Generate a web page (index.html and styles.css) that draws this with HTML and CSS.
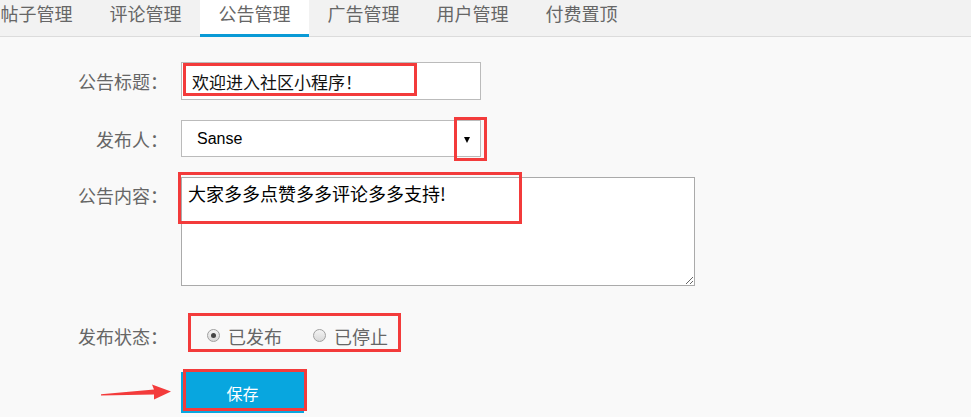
FILE: index.html
```html
<!DOCTYPE html>
<html lang="zh-CN">
<head>
<meta charset="utf-8">
<title>公告管理</title>
<link rel="stylesheet" href="styles.css">
</head>
<body>
<nav class="tabs">
  <div class="tab">帖子管理</div>
  <div class="tab">评论管理</div>
  <div class="tab active">公告管理</div>
  <div class="tab">广告管理</div>
  <div class="tab">用户管理</div>
  <div class="tab">付费置顶</div>
</nav>
<form class="form">
  <div class="row">
    <label class="label">公告标题：</label>
    <div class="field">
      <input class="text-input" type="text" value="欢迎进入社区小程序！">
      <span class="mark mark-title"></span>
    </div>
  </div>
  <div class="row">
    <label class="label">发布人：</label>
    <div class="field">
      <div class="select"><span class="select-value">Sanse</span><span class="caret"></span></div>
      <span class="mark mark-caret"></span>
    </div>
  </div>
  <div class="row row-top">
    <label class="label label-top">公告内容：</label>
    <div class="field">
      <textarea class="textarea">大家多多点赞多多评论多多支持!</textarea>
      <span class="mark mark-content"></span>
    </div>
  </div>
  <div class="row row-status">
    <label class="label label-status">发布状态：</label>
    <div class="radio-group">
      <span class="radio-item"><span class="radio checked"></span>已发布</span>
      <span class="radio-item"><span class="radio"></span>已停止</span>
    </div>
  </div>
  <div class="row row-submit">
    <div class="arrow-cell">
      <svg class="arrow" width="74" height="20" viewBox="0 0 74 20">
        <polygon points="2,11.2 55,6.5 53,1.5 72,8.5 55,16.5 55,11.5 2,12.6" fill="#f33b3b"/>
      </svg>
    </div>
    <div class="field">
      <button type="button" class="btn">保存</button>
      <span class="mark mark-btn"></span>
    </div>
  </div>
</form>
</body>
</html>
```
FILE: styles.css
```css
* { box-sizing: border-box; }
body {
  margin: 0;
  background: #f9f9f9;
  font-family: "Noto Sans CJK SC", "Liberation Sans", sans-serif;
  color: #666;
  overflow: hidden;
}
.tabs {
  display: flex;
  height: 37px;
  background: #f2f2f2;
  border-bottom: 1px solid #dcdcdc;
  padding-left: 0;
  margin-left: -18px;
}
.tab {
  width: 109px;
  height: 37px;
  margin-bottom: -1px;
  text-align: center;
  font-size: 18px;
  line-height: 26px;
  color: #666;
}
.tab.active {
  background: #fff;
  border-bottom: 3px solid #0a9ad6;
}
.form {
  padding-top: 25px;
}
.row {
  display: flex;
  align-items: center;
  margin-bottom: 20px;
}
.row-top { align-items: flex-start; }
.row-status { margin-bottom: 20px; margin-top: 27px; }
.label {
  width: 168px;
  margin-right: 13px;
  text-align: right;
  font-size: 18px;
  color: #666;
  white-space: nowrap;
}
.label-top { line-height: 36px; }
.label-status { padding-top: 7px; }
.field { position: relative; }
.text-input {
  display: block;
  width: 300px;
  height: 38px;
  border: 1px solid #bbb;
  background: #fff;
  padding: 0 10px;
  font-family: "Noto Sans CJK SC", sans-serif;
  font-size: 17px;
  color: #111;
  outline: none;
}
.select {
  display: flex;
  align-items: center;
  width: 300px;
  height: 37px;
  border: 1px solid #bbb;
  background: #fff;
  padding-left: 15px;
}
.select-value {
  flex: 1;
  font-family: "Liberation Sans", Arial, sans-serif;
  font-size: 16px;
  color: #000;
}
.caret {
  width: 0;
  height: 0;
  border-left: 3.5px solid transparent;
  border-right: 3.5px solid transparent;
  border-top: 6px solid #000;
  margin-right: 10px;
  margin-top: 2px;
}
.textarea {
  display: block;
  width: 514px;
  height: 109px;
  border: 1px solid #aaa;
  background: #fff;
  padding: 3px 6px;
  font-family: "Noto Sans CJK SC", sans-serif;
  font-size: 18px;
  line-height: 24px;
  color: #000;
  outline: none;
}
.mark {
  position: absolute;
  border: 3px solid #f33b3b;
  pointer-events: none;
}
.mark-title { left: 2px; top: 1px; width: 234px; height: 33px; }
.mark-caret { left: 273px; top: -3px; width: 33px; height: 44px; }
.mark-content { left: -3px; top: -5px; width: 344px; height: 52px; }
.mark-btn { left: 2px; top: -3px; width: 124px; height: 42px; }
.radio-group {
  display: flex;
  align-items: center;
  margin-left: 7px;
  width: 213px;
  height: 39px;
  border: 3px solid #f33b3b;
  padding: 6px 0 0 16px;
  gap: 31px;
}
.radio-item {
  display: flex;
  align-items: center;
  font-size: 18px;
  color: #666;
  line-height: 26px;
}
.radio {
  width: 13px;
  height: 13px;
  border-radius: 50%;
  border: 1px solid #a0a0a0;
  background: linear-gradient(#f4f4f4, #d8d8d8);
  margin-right: 8px;
  position: relative;
}
.radio.checked::after {
  content: "";
  position: absolute;
  left: 3px;
  top: 3px;
  width: 5px;
  height: 5px;
  border-radius: 50%;
  background: #444;
}
.row-submit { margin-bottom: 0; }
.arrow-cell {
  width: 181px;
  display: flex;
  justify-content: flex-end;
  padding-right: 8px;
}
.btn {
  display: block;
  width: 123px;
  height: 41px;
  border: none;
  background: #08a6df;
  color: #fff;
  font-family: "Noto Sans CJK SC", sans-serif;
  font-size: 16px;
  padding: 0;
}
```
